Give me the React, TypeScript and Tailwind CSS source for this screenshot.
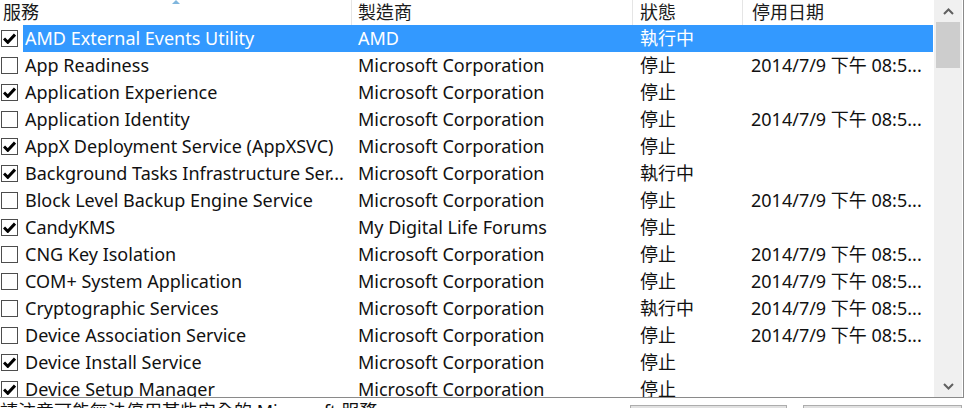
import type { ReactNode } from 'react';

type Row = {
  on: boolean;
  name: string;
  maker: string;
  state: string;
  date?: string;
};

const MS = 'Microsoft Corporation';
const DATE = '2014/7/9 下午 08:5...';

const rows: Row[] = [
  { on: true, name: 'AMD External Events Utility', maker: 'AMD', state: '執行中' },
  { on: false, name: 'App Readiness', maker: MS, state: '停止', date: DATE },
  { on: true, name: 'Application Experience', maker: MS, state: '停止' },
  { on: false, name: 'Application Identity', maker: MS, state: '停止', date: DATE },
  { on: true, name: 'AppX Deployment Service (AppXSVC)', maker: MS, state: '停止' },
  { on: true, name: 'Background Tasks Infrastructure Ser...', maker: MS, state: '執行中' },
  { on: false, name: 'Block Level Backup Engine Service', maker: MS, state: '停止', date: DATE },
  { on: true, name: 'CandyKMS', maker: 'My Digital Life Forums', state: '停止' },
  { on: false, name: 'CNG Key Isolation', maker: MS, state: '停止', date: DATE },
  { on: false, name: 'COM+ System Application', maker: MS, state: '停止', date: DATE },
  { on: false, name: 'Cryptographic Services', maker: MS, state: '執行中', date: DATE },
  { on: false, name: 'Device Association Service', maker: MS, state: '停止', date: DATE },
  { on: true, name: 'Device Install Service', maker: MS, state: '停止' },
  { on: true, name: 'Device Setup Manager', maker: MS, state: '停止' },
];

const font = { fontFamily: '"Noto Sans", "Noto Sans CJK TC", sans-serif' };

function Checkbox({ on }: { on: boolean }) {
  return (
    <span className="flex h-[17px] w-[17px] shrink-0 items-center justify-center border border-[#4d4d4d] bg-white">
      {on && (
        <svg width="13" height="11" viewBox="0 0 13 11">
          <path d="M1 5.5 L4.8 9.3 L12 1.5" fill="none" stroke="#000" strokeWidth="3" />
        </svg>
      )}
    </span>
  );
}

function HeadCell({ w, pl, children, last }: { w: string; pl: string; children: ReactNode; last?: boolean }) {
  return (
    <div className={`${w} ${pl} flex h-full shrink-0 items-center ${last ? '' : 'border-r border-[#e5e5e5]'}`}>
      {children}
    </div>
  );
}

function ScrollArrow({ up }: { up?: boolean }) {
  return (
    <div className="flex h-[22px] items-center justify-center">
      <svg width="11" height="7" viewBox="0 0 11 7">
        <path
          d={up ? 'M1 6 L5.5 1.5 L10 6' : 'M1 1 L5.5 5.5 L10 1'}
          fill="none"
          stroke="#606060"
          strokeWidth="2"
        />
      </svg>
    </div>
  );
}

export default function App() {
  return (
    <div className="h-[408px] w-[971px] overflow-hidden bg-white text-[18px] text-[#111]" style={font}>
      <div className="flex h-[398px] w-[964px] border-r border-b border-[#8a8a8a]">
        <div className="flex w-[933px] flex-col overflow-hidden">
          <div className="relative flex h-[25px] shrink-0 items-center text-[#1a1a1a]">
            <svg className="absolute left-[170px] top-0" width="12" height="4" viewBox="0 0 12 4">
              <path d="M2 4 L6 0 L10 4 Z" fill="#7fb6dd" />
            </svg>
            <HeadCell w="w-[352px]" pl="pl-[3px]">服務</HeadCell>
            <HeadCell w="w-[281px]" pl="pl-[6px]">製造商</HeadCell>
            <HeadCell w="w-[110px]" pl="pl-[7px]">狀態</HeadCell>
            <HeadCell w="w-[189px]" pl="pl-[9px]" last>停用日期</HeadCell>
          </div>
          {rows.map((r, i) => {
            const sel = i === 0;
            return (
              <div key={r.name} className="flex h-[27px] shrink-0 items-center">
                <div className="flex w-[23px] shrink-0 pl-[1px]">
                  <Checkbox on={r.on} />
                </div>
                <div
                  className={`flex h-full flex-1 items-center whitespace-nowrap ${
                    sel ? 'bg-[#3399ff] text-white' : ''
                  }`}
                >
                  <div className="w-[329px] shrink-0 overflow-hidden pl-[2px]">{r.name}</div>
                  <div className="w-[281px] shrink-0 pl-[6px]">{r.maker}</div>
                  <div className="w-[110px] shrink-0 pl-[7px]">{r.state}</div>
                  <div className="flex-1 pl-[8px]">{r.date ?? ''}</div>
                </div>
              </div>
            );
          })}
        </div>
        <div className="ml-[1px] flex w-[28px] flex-col bg-[#f0f0f0]">
          <ScrollArrow up />
          <div className="mx-[2px] h-[46px] bg-[#cdcdcd]" />
          <div className="flex-1" />
          <ScrollArrow />
        </div>
      </div>
      <div className="flex h-[40px] items-start">
        <div className="w-[630px] shrink-0 pt-[2px] leading-[22px]">請注意可能無法停用某些安全的 Microsoft 服務。</div>
        <div className="mt-[7px] h-[28px] w-[157px] border border-[#adadad] bg-[#e1e1e1]" />
        <div className="ml-[16px] mt-[7px] h-[28px] w-[159px] border border-[#adadad] bg-[#e1e1e1]" />
      </div>
    </div>
  );
}
